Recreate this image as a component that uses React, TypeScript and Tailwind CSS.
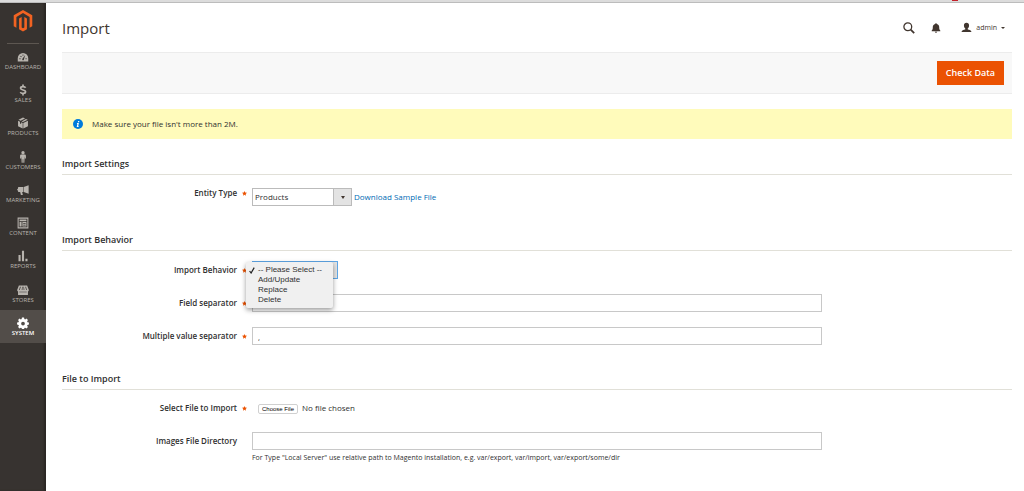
import type { ReactNode } from 'react'

type NavItem = { label: string; icon: ReactNode; active?: boolean }

const NAV: NavItem[] = [
  {
    label: 'Dashboard',
    icon: (
      <path
        fillRule="evenodd"
        d="M1 14V9.500a7 7 0 0 1 14 0V14zM3.200 11h1.500V9.700H3.200zM4.300 7.300l1.200 1 .8-1-1.100-1zM7.400 4.600v1.700h1.100V4.600zM10.900 5.400 7 10.800a1.200 1.200 0 0 0 2 1.200zM11.400 9.700V11h1.400V9.700z"
      />
    ),
  },
  {
    label: 'Sales',
    icon: (
      <path
        d="M11.500 5.100C10.800 4 9.600 3.600 8 3.600c-1.900 0-3.200.8-3.200 2.100 0 3.200 6.600 1.400 6.600 4.700 0 1.400-1.400 2.200-3.400 2.200-1.600 0-2.900-.5-3.600-1.700M8 .8v2.800M8 12.600v2.800"
        fill="none"
        stroke="currentColor"
        strokeWidth="2.300"
      />
    ),
  },
  {
    label: 'Products',
    icon: <path d="m8 .8 2.700 1.300L4.800 5 2 3.700zM11.900 2.700 14.300 3.700 8 6.800 6.100 5.900zM1.400 4.900 4 6.200v2.500l1.500.7V7l2.100 1v7.400l-6.200-3.100zM14.600 4.900v7.400l-6.200 3.100V8z" />,
  },
  {
    label: 'Customers',
    icon: (
      <>
        <circle cx="8" cy="2.300" r="2.200" />
        <path d="M6 4.700h4c1.100 0 1.900.7 1.900 1.700v3.700h-1.500V7.500h-.2l-.4 8.300H8.400v-4.700h-.8v4.700H6.200l-.4-8.300h-.2v2.600H4.100V6.400c0-1 .8-1.700 1.900-1.700z" />
      </>
    ),
  },
  {
    label: 'Marketing',
    icon: <path d="M15.500 1.700v11.300L9 10.800V3.900zM8.300 4.100v6.400H6.900l.9 4.200H5.200l-1-4.200H2.400a1.200 1.200 0 0 1-1.200-1.200V8.500L.3 8.100V6.800l.9-.3V5.300a1.200 1.200 0 0 1 1.200-1.200z" />,
  },
  {
    label: 'Content',
    icon: <path fillRule="evenodd" d="M.8.8h14.400v14.400H.8zM2.200 2.200v11.600h11.600V2.200zM3.400 3.400h9.200v2.200H3.400zM3.400 6.700h2.700v5.900H3.400zM7.200 6.700h5.400v5.900H7.200zM8.300 7.900v1h3.200v-1zM8.300 10.300v1h3.200v-1z" />,
  },
  { label: 'Reports', icon: <path d="M2 6.500h2.800V15H2zM6.600 1h2.800v14H6.600zM11.200 11.500H14V15h-2.800z" /> },
  {
    label: 'Stores',
    icon: (
      <path
        fillRule="evenodd"
        d="M2.500 2h11L15.800 8c0 1.100-.5 1.700-1.200 1.900V14.500H1.400V9.900C.7 9.700.2 9.100.2 8zM4 3.600 2.800 8h.9L5.100 3.600zM6.800 3.600 6.300 8h.9l.3-4.400zM8.600 3.600 8.900 8h.9l-.5-4.400zM11 3.600 12.300 8h.9L12 3.600zM3 10.300v.8h10v-.8z"
      />
    ),
  },
  {
    label: 'System',
    active: true,
    icon: (
      <path
        fillRule="evenodd"
        d="M6.600.8h2.800l.4 2 1.100.4 1.700-1.100 2 2-1.100 1.700.4 1.100 2 .4v2.800l-2 .4-.4 1.100 1.100 1.700-2 2-1.700-1.100-1.100.4-.4 2H6.600l-.4-2-1.100-.4-1.700 1.100-2-2 1.100-1.700-.4-1.100-2-.4V7.300l2-.4.4-1.100-1.100-1.700 2-2 1.700 1.100 1.100-.4zM8 6.200a2.500 2.500 0 1 0 0 5 2.500 2.500 0 0 0 0-5z"
      />
    ),
  },
]

function Sidebar() {
  return (
    <aside className="w-[46px] shrink-0 bg-[#373330] shadow-[inset_-2px_0_2px_#2b2724]">
      <a href="#home" aria-label="Magento" className="flex h-10 items-center justify-center pb-1">
        <svg viewBox="0 0 20 23" className="h-[22px] w-5" fill="#f26322">
          <path d="M10 0 19.700 5.600V17l-2.800 1.600V7.300L10 3.200 3.100 7.300v11.300L.3 17V5.600z" />
          <path d="M5.900 8.800 8.600 7.200v11.200l1.400.8 1.400-.8V7.200l2.700 1.600v11.300L10 22.500l-4.100-2.400z" />
        </svg>
      </a>
      <div className="mx-[7px] border-b border-[#5d5751]" />
      <nav className="flex h-[299px] flex-col">
        {NAV.map((item) => (
          <a
            key={item.label}
            href={`#${item.label.toLowerCase()}`}
            className={`flex flex-1 flex-col items-center pt-[7px] text-[6px] leading-[9px] uppercase ${
              item.active ? 'bg-[#524d49] font-semibold text-white' : 'text-[#b8b4ae]'
            }`}
          >
            <svg viewBox="0 0 16 16" className="h-3 w-3 shrink-0" fill="currentColor">
              {item.icon}
            </svg>
            {item.label}
          </a>
        ))}
      </nav>
    </aside>
  )
}

function Header() {
  return (
    <header className="flex h-[49px] items-center justify-between pr-[7px]">
      <h1 className="pt-px text-[15px] leading-5 text-[#41362f]">Import</h1>
      <div className="flex items-center text-[#41362f]">
        <button aria-label="Search" className="mr-4">
          <svg viewBox="0 0 12 12" className="h-3 w-3" fill="none" stroke="currentColor">
            <circle cx="4.800" cy="4.800" r="3.900" strokeWidth="1.300" />
            <path d="m7.700 7.700 3.500 3.500" strokeWidth="1.800" />
          </svg>
        </button>
        <button aria-label="Notifications" className="mr-5">
          <svg viewBox="0 0 10 10" className="h-2.5 w-2.5" fill="currentColor">
            <path d="M5 .3c.6 0 .9.3.9.8C7.500 1.500 8.200 2.800 8.200 4.300c0 1.800.3 2.500 1.100 3.300v.6H.7v-.6c.8-.8 1.100-1.500 1.100-3.300 0-1.500.7-2.800 2.300-3.200 0-.5.3-.8.9-.8zM3.800 8.700h2.400c-.1.700-.5 1.100-1.200 1.100s-1.100-.4-1.200-1.100z" />
          </svg>
        </button>
        <button className="flex items-center text-[7px] leading-3">
          <svg viewBox="0 0 12 12" className="mr-1 h-[11px] w-[11px]" fill="currentColor">
            <path d="M6 .8c1.800 0 2.800 1.200 2.800 2.900 0 1.400-.6 2.600-1.400 3.200v1.200c1.800.5 4 1 4 2.900H.6c0-1.900 2.200-2.400 4-2.900V6.900c-.8-.6-1.400-1.800-1.400-3.200C3.200 2 4.200.8 6 .8z" />
          </svg>
          admin
          <svg viewBox="0 0 4 2" className="ml-1 h-[2px] w-1" fill="currentColor">
            <path d="M0 0h4L2 2z" />
          </svg>
        </button>
      </div>
    </header>
  )
}

function Section({ title, children }: { title: string; children: ReactNode }) {
  return (
    <section>
      <h2 className="h-5 border-b border-[#e1e0d8] text-[9px] leading-[17px] font-semibold">{title}</h2>
      {children}
    </section>
  )
}

function Row({ id, label, required, children }: { id: string; label: string; required?: boolean; children: ReactNode }) {
  return (
    <div className="flex">
      <div className="flex h-[18px] w-1/5 shrink-0 items-center justify-end pr-[5px] font-semibold">
        <label htmlFor={id}>{label}</label>
        <span className="flex w-[10px] justify-end">
          {required && (
            <svg viewBox="0 0 10 10" className="h-[5px] w-[5px]" fill="#eb5202">
              <path d="m5 0 1.400 3.200 3.600.3-2.700 2.400.8 3.600L5 7.600 1.900 9.500l.8-3.600L0 3.500l3.600-.3z" />
            </svg>
          )}
        </span>
      </div>
      <div className="w-3/5">{children}</div>
    </div>
  )
}

const inputClass = 'block h-[18px] w-full border border-[#c8c8c8] bg-white px-[5px] outline-none'
const BEHAVIORS = ['-- Please Select --', 'Add/Update', 'Replace', 'Delete']

function Arrow() {
  return (
    <span className="pointer-events-none absolute inset-y-px right-px flex w-[18px] items-center justify-center border-l border-[#bbb] bg-[#e3e3e3]">
      <svg viewBox="0 0 4 3" className="h-[3px] w-1" fill="#41362f">
        <path d="M0 0h4L2 3z" />
      </svg>
    </span>
  )
}

export default function App() {
  return (
    <div className="flex min-h-screen flex-col bg-white font-['Open_Sans',sans-serif] text-[8px] leading-3 text-[#303030]">
      <div className="flex h-[3px] shrink-0 justify-end border-b border-[#bcbcbc] bg-[#dcdcdc] pr-[66px]">
        <span className="h-px w-1.5 bg-[#c4202a]" />
      </div>
      <div className="flex flex-1">
        <Sidebar />
        <main className="min-w-0 flex-1 pr-3 pl-4">
          <Header />
          <div className="flex h-[42px] items-center justify-end border-y border-[#ececec] bg-[#f8f8f8] pr-2">
            <button className="h-6 bg-[#eb5202] px-[9px] text-[9px] font-semibold text-white">Check Data</button>
          </div>
          <div className="mt-[15px] flex h-[30px] items-center bg-[#fffbbb] pl-[11px]">
            <svg viewBox="0 0 10 10" className="mr-[9px] h-[10px] w-[10px]">
              <circle cx="5" cy="5" r="5" fill="#007bdb" />
              <path d="M5.100 2h1.300l-.3 1.200H4.800zM4.100 4h1.800l-.7 3h.5l-.2.9H3.700l.7-3h-.5z" fill="#fff" />
            </svg>
            Make sure your file isn't more than 2M.
          </div>

          <form className="mt-4" onSubmit={(e) => e.preventDefault()}>
            <Section title="Import Settings">
              <div className="pt-[9px] pb-[25px]">
                <Row id="entity" label="Entity Type" required>
                  <div className="flex items-center pt-1">
                    <div className="relative w-[100px]">
                      <select id="entity" defaultValue="Products" className="block h-[18px] w-full appearance-none border border-[#bbb] bg-white pl-[2px] outline-none">
                        <option>Products</option>
                      </select>
                      <Arrow />
                    </div>
                    <a href="#sample" className="ml-[2px] text-[#006bb4]">
                      Download Sample File
                    </a>
                  </div>
                </Row>
              </div>
            </Section>

            <Section title="Import Behavior">
              <div className="flex flex-col gap-[15px] pt-[10px] pb-[25px]">
                <Row id="behavior" label="Import Behavior" required>
                  <div className="relative w-[86px]">
                    <select
                      id="behavior"
                      defaultValue={BEHAVIORS[0]}
                      className="block h-[18px] w-full appearance-none border border-[#5ea6e6] bg-white pl-[2px] outline-none"
                    >
                      {BEHAVIORS.map((b) => (
                        <option key={b}>{b}</option>
                      ))}
                    </select>
                    <Arrow />
                    <ul
                      role="listbox"
                      aria-label="Import Behavior"
                      className="absolute top-px right-[5px] z-10 w-[87px] rounded-[2px] bg-[#f0f0f0] pt-[3px] pb-[3px] font-['Liberation_Sans',sans-serif] leading-[10px] shadow-[0_2px_5px_rgba(0,0,0,0.4)]"
                    >
                      {BEHAVIORS.map((b, i) => (
                        <li key={b} role="option" aria-selected={i === 0} className="flex items-center whitespace-nowrap">
                          <span className="flex w-3 shrink-0 justify-center">
                            {i === 0 && (
                              <svg viewBox="0 0 6 7" className="h-[7px] w-1.5" fill="none" stroke="#222" strokeWidth="1.200">
                                <path d="m.6 4 1.500 2L5.200.6" />
                              </svg>
                            )}
                          </span>
                          {b}
                        </li>
                      ))}
                    </ul>
                  </div>
                </Row>
                <Row id="separator" label="Field separator" required>
                  <input id="separator" type="text" className={inputClass} />
                </Row>
                <Row id="multi" label="Multiple value separator" required>
                  <input id="multi" type="text" defaultValue="," className={inputClass} />
                </Row>
              </div>
            </Section>

            <Section title="File to Import">
              <div className="flex flex-col gap-[15px] pt-[9px]">
                <Row id="file" label="Select File to Import" required>
                  <input
                    id="file"
                    type="file"
                    className="ml-[6px] block h-[18px] py-[2px] leading-[14px] file:mr-1 file:h-[10px] file:rounded-[2px] file:border file:border-solid file:border-[#d0d0d0] file:bg-white file:px-[3px] file:font-['Liberation_Sans',sans-serif] file:text-[6px] file:leading-2 file:text-black"
                  />
                </Row>
                <Row id="images" label="Images File Directory">
                  <input id="images" type="text" className={inputClass} />
                  <p className="mt-[2px] text-[7px]">
                    For Type "Local Server" use relative path to Magento installation, e.g. var/export, var/import, var/export/some/dir
                  </p>
                </Row>
              </div>
            </Section>
          </form>
        </main>
      </div>
    </div>
  )
}
